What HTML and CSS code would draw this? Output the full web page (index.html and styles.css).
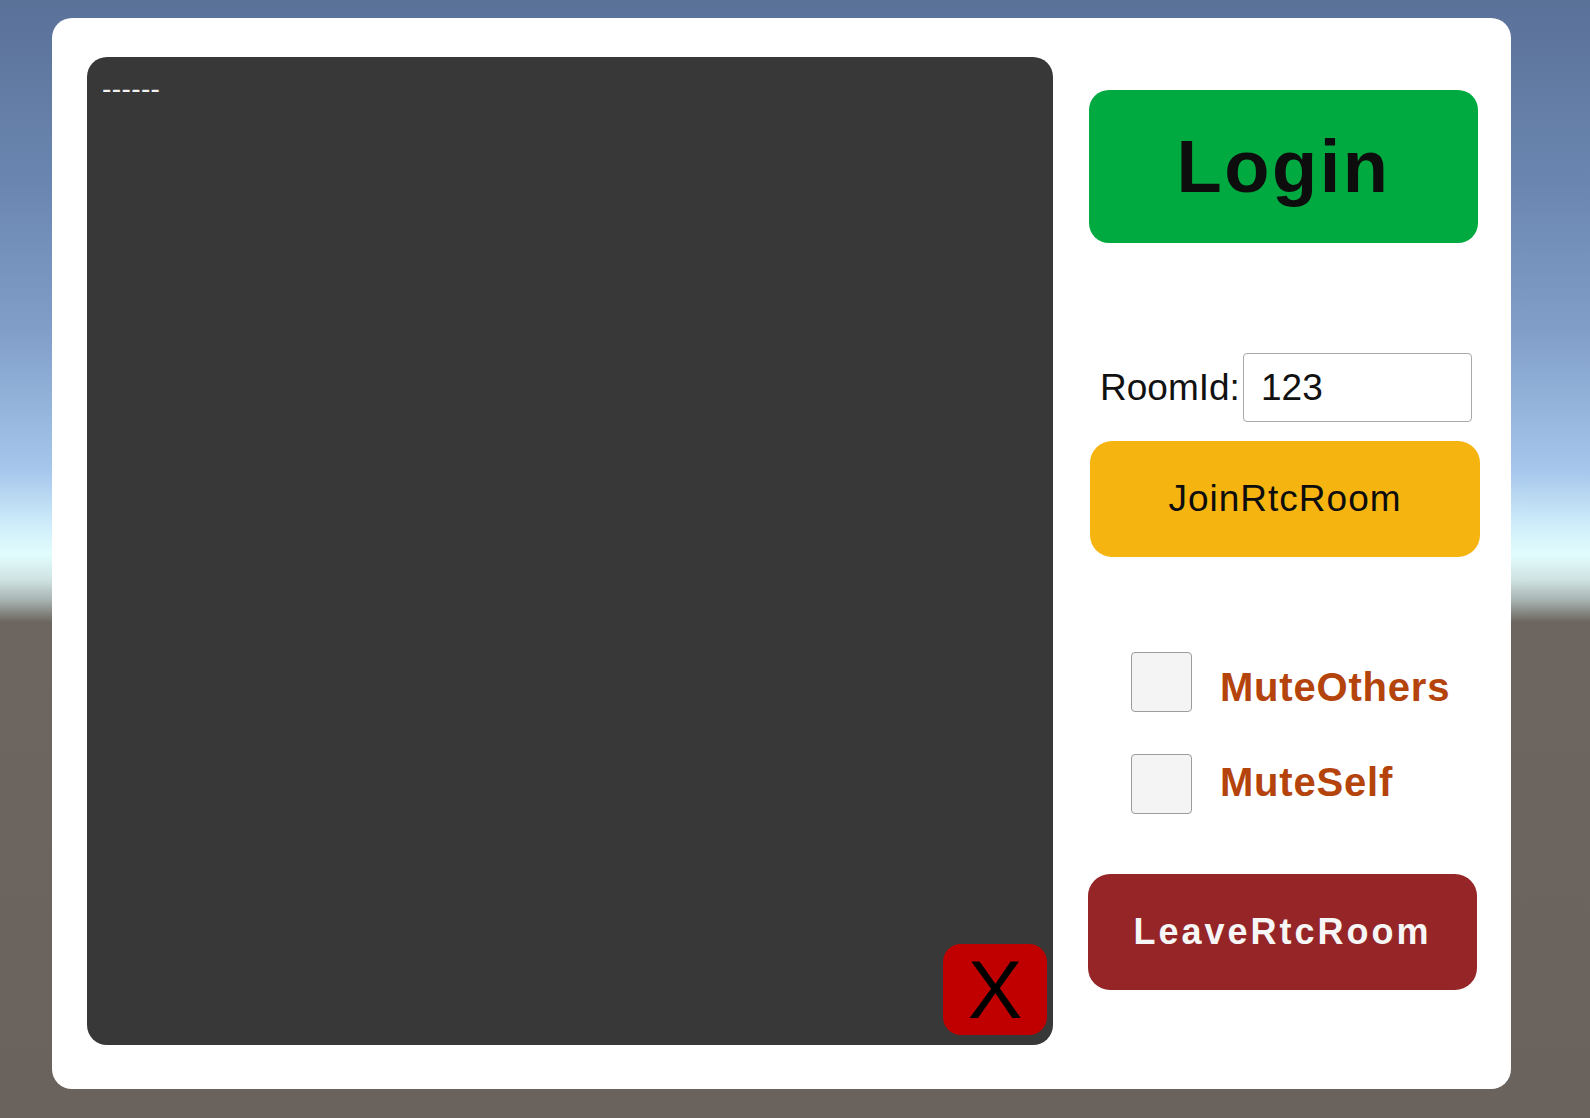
FILE: index.html
```html
<!DOCTYPE html>
<html>
<head>
<meta charset="utf-8">
<title>Rtc Demo</title>
<link rel="stylesheet" href="styles.css">
</head>
<body>
<div class="scene">
  <div class="panel">
    <div class="log">
      <div class="log-text">------</div>
      <button class="close-btn">X</button>
    </div>
    <div class="side">
      <button class="btn login">Login</button>
      <div class="room-row">
        <span class="room-label">RoomId:</span>
        <div class="room-input">123</div>
      </div>
      <button class="btn join">JoinRtcRoom</button>
      <div class="check-row first">
        <span class="box"></span>
        <span class="check-label">MuteOthers</span>
      </div>
      <div class="check-row second">
        <span class="box"></span>
        <span class="check-label">MuteSelf</span>
      </div>
      <button class="btn leave">LeaveRtcRoom</button>
    </div>
  </div>
</div>
</body>
</html>
```
FILE: styles.css
```css
html, body {
  margin: 0;
  padding: 0;
}
body {
  width: 1590px;
  height: 1118px;
  overflow: hidden;
  font-family: "Liberation Sans", Arial, sans-serif;
}
.scene {
  width: 1590px;
  height: 1118px;
  box-sizing: border-box;
  padding: 18px 0 0 52px;
  background: linear-gradient(to bottom,
    #5a7198 0px,
    #6a86b0 180px,
    #809ec8 330px,
    #a6c6ec 470px,
    #d2f0fb 530px,
    #e2fdfd 555px,
    #cfe2e2 580px,
    #a7b4b2 600px,
    #6d6660 622px,
    #6a625c 1118px);
}
.panel {
  width: 1459px;
  height: 1071px;
  box-sizing: border-box;
  background: #ffffff;
  border-radius: 20px;
  padding: 39px 0 0 35px;
  display: flex;
  gap: 35px;
}
.log {
  position: relative;
  width: 966px;
  height: 988px;
  background: #383838;
  border-radius: 20px;
  flex: none;
}
.log-text {
  color: #f2f2f2;
  font-size: 28px;
  line-height: 1;
  padding: 18px 0 0 15px;
  letter-spacing: 0.4px;
}
.close-btn {
  position: absolute;
  right: 6px;
  bottom: 10px;
  width: 104px;
  height: 91px;
  border: none;
  border-radius: 18px;
  background: #c00000;
  color: #000;
  font-family: "Liberation Sans", Arial, sans-serif;
  font-size: 82px;
  line-height: 1;
  padding: 0;
  display: flex;
  align-items: center;
  justify-content: center;
}
.side {
  width: 392px;
  flex: none;
  display: flex;
  flex-direction: column;
}
.btn {
  border: none;
  padding: 0;
  font-family: "Liberation Sans", Arial, sans-serif;
  display: flex;
  align-items: center;
  justify-content: center;
  border-radius: 20px;
}
.login {
  margin: 33px 0 0 1px;
  width: 389px;
  height: 153px;
  background: #00aa40;
  color: #0d0d0d;
  font-size: 74px;
  font-weight: bold;
  letter-spacing: 2.5px;
}
.room-row {
  margin-top: 110px;
  display: flex;
  align-items: center;
  padding-left: 12px;
}
.room-label {
  font-size: 37px;
  color: #111;
  width: 143px;
}
.room-input {
  width: 229px;
  height: 69px;
  box-sizing: border-box;
  border: 1px solid #a9a9a9;
  border-radius: 4px;
  background: #fff;
  font-size: 37px;
  color: #111;
  display: flex;
  align-items: center;
  padding-left: 17px;
}
.join {
  margin: 19px 0 0 2px;
  width: 390px;
  height: 116px;
  background: #f5b40f;
  color: #0d0d0d;
  font-size: 37px;
  letter-spacing: 1px;
  border-radius: 22px;
}
.check-row {
  display: flex;
  align-items: center;
  padding-left: 43px;
}
.check-row.first {
  margin-top: 95px;
}
.check-row.second {
  margin-top: 42px;
}
.box {
  width: 61px;
  height: 60px;
  box-sizing: border-box;
  border: 1px solid #9c9c9c;
  border-radius: 4px;
  background: #f4f4f4;
  flex: none;
}
.check-label {
  margin-left: 28px;
  font-size: 40px;
  font-weight: bold;
  color: #b4430c;
  letter-spacing: 0.8px;
}
.first .check-label {
  padding-top: 10px;
}
.second .check-label {
  padding-bottom: 4px;
}
.leave {
  margin-top: 60px;
  width: 389px;
  height: 116px;
  background: #952527;
  color: #f6f6f6;
  font-size: 36px;
  font-weight: bold;
  letter-spacing: 3px;
  border-radius: 22px;
}
```
